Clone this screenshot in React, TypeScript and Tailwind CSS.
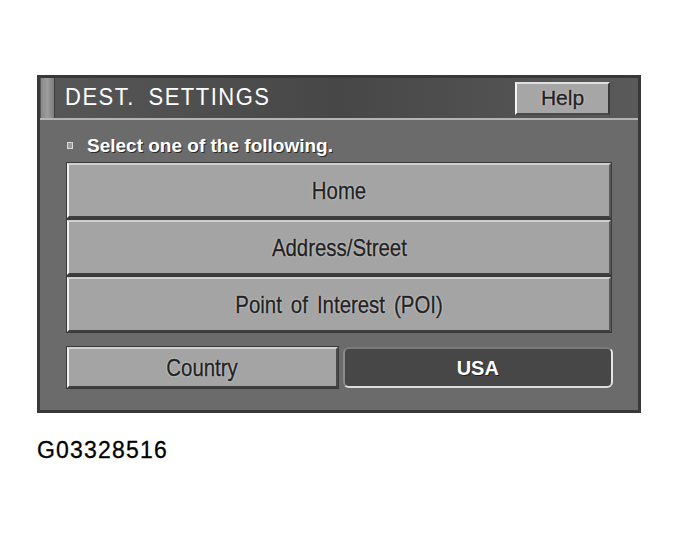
import React from "react"

const font = { fontFamily: '"Liberation Sans", Arial, sans-serif' }

const menuItems = ["Home", "Address/Street", "Point of Interest (POI)"]

function MenuButton({ label }: { label: string }) {
  return (
    <button className="h-[55px] w-full flex items-center justify-center bg-[#a4a4a4] border-l-2 border-t-2 border-r-2 border-b-2 border-l-[#f2f2f2] border-t-[#cfcfcf] border-r-[#5a5a5a] border-b-[#3e3e3e] shadow-[0_0_0_1px_#3a3a3a]">
      <span className="inline-block scale-x-[0.85] text-[24px] leading-none text-[#222] [word-spacing:4px] [-webkit-text-stroke:0.5px_#222] [text-shadow:0_0_2px_#fff,0_0_1px_#fff]">
        {label}
      </span>
    </button>
  )
}

export default function App() {
  return (
    <div className="w-[680px] h-[534px] bg-white pl-[37px] pt-[75px]" style={font}>
      <div className="w-[604px] h-[338px] flex flex-col border-[3px] border-[#383838] bg-[#6b6b6b]">
        {/* title bar */}
        <div className="h-[42px] flex items-center bg-linear-to-r from-[#575757] via-[#474747] to-[#5a5a5a] border-b-2 border-b-[#b4b4b4]">
          <div className="w-[14px] h-full ml-px bg-linear-to-r from-[#8a8a8a] via-[#9c9c9c] to-[#7e7e7e] border-r border-r-[#3c3c3c]" />
          <span className="ml-[10px] text-[22px] leading-none text-white tracking-[1.5px] [word-spacing:6px] scale-y-[1.05] inline-block">
            DEST. SETTINGS
          </span>
          <button className="ml-auto mr-[28px] w-[95px] h-[33px] flex items-center justify-center bg-[#a6a6a6] border-2 border-l-[#f4f4f4] border-t-[#e0e0e0] border-r-[#3a3a3a] border-b-[#4a4a4a]">
            <span className="-mt-[2px] text-[21px] leading-none text-[#222] [-webkit-text-stroke:0.5px_#222] [text-shadow:0_0_2px_#fff,0_0_1px_#fff]">
              Help
            </span>
          </button>
        </div>

        {/* body */}
        <div className="flex-1 flex flex-col px-[27px] pt-[13px]">
          <div className="h-[24px] flex items-center">
            <div className="w-[6px] h-[7px] bg-[#9a9a9a] border border-[#d8d8d8]" />
            <span className="ml-[14px] text-[19px] font-bold leading-none text-white [text-shadow:1px_1px_0_#2a2a2a]">
              Select one of the following.
            </span>
          </div>

          <div className="mt-[6px] flex flex-col gap-[2px]">
            {menuItems.map((item) => (
              <MenuButton key={item} label={item} />
            ))}
          </div>

          <div className="mt-[15px] grid grid-cols-2 gap-[5px] -mr-[2px]">
            <button className="h-[41px] flex items-center justify-center bg-[#a4a4a4] border-2 border-l-[#f2f2f2] border-t-[#cfcfcf] border-r-[#4a4a4a] border-b-[#3e3e3e] shadow-[0_0_0_1px_#3a3a3a]">
              <span className="inline-block scale-x-[0.85] text-[24px] leading-none text-[#222] [-webkit-text-stroke:0.5px_#222] [text-shadow:0_0_2px_#fff,0_0_1px_#fff]">
                Country
              </span>
            </button>
            <button className="h-[41px] flex items-center justify-center bg-[#474747] rounded-[6px] border-2 border-l-[#8a8a8a] border-t-[#7a7a7a] border-r-[#e4e4e4] border-b-[#dcdcdc]">
              <span className="text-[20px] font-bold leading-none text-white [text-shadow:1px_1px_0_#222]">USA</span>
            </button>
          </div>
        </div>
      </div>

      <div className="mt-[26px] text-[23px] leading-none text-black tracking-[1.2px] [-webkit-text-stroke:0.3px_#000]">
        G03328516
      </div>
    </div>
  )
}
